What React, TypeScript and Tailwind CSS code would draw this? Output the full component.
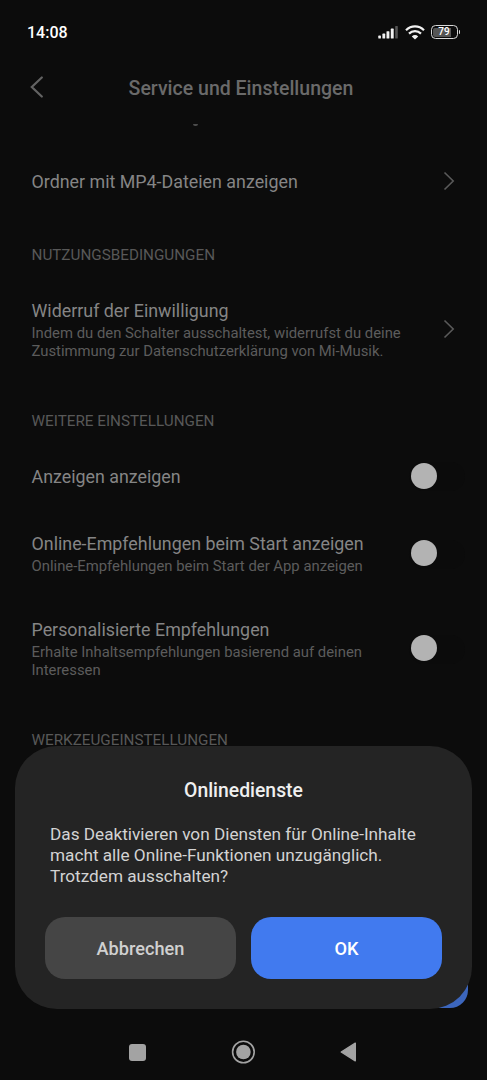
import type { ReactNode } from "react";

function StatusBar() {
  return (
    <div className="flex h-16 shrink-0 items-center justify-between pl-[27px] pr-[27px]">
      <span className="pt-[2px] text-[16px] font-medium leading-none text-white">14:08</span>
      <div className="flex items-center gap-[6px]">
        <svg width="21" height="14" viewBox="0 0 21 14" fill="#f2f2f2">
          <rect x="0.3" y="10.6" width="2.6" height="2.9" rx="0.6" />
          <rect x="4.4" y="8.6" width="2.8" height="4.9" rx="0.6" />
          <rect x="8.5" y="6.2" width="2.9" height="7.3" rx="0.6" />
          <rect x="12.8" y="3.6" width="2.9" height="9.9" rx="0.6" />
          <rect x="17.2" y="1" width="2.6" height="12.5" rx="0.6" fill="#555" />
        </svg>
        <svg width="20" height="15" viewBox="0 0 20 15" fill="none" stroke="#f2f2f2" strokeWidth="2.2">
          <path d="M1 5.2C6.2 0.2 13.8 0.2 19 5.2" />
          <path d="M4 8.6C7.4 5.3 12.6 5.3 16 8.6" />
          <path d="M6.8 11.4C8.7 9.6 11.3 9.6 13.2 11.4L10 14.6Z" fill="#f2f2f2" stroke="none" />
        </svg>
        <div className="flex items-center gap-px">
          <div className="flex h-[14px] w-[27px] rounded-[4.5px] border-[1.5px] border-[#d8d8d8] p-[1.5px]">
            <div className="flex flex-1 items-center justify-center rounded-[2px] bg-linear-to-r from-[#555] from-80% to-transparent to-80% text-[10px] font-medium leading-none text-white">
              79
            </div>
          </div>
          <div className="h-[4px] w-[1.5px] rounded-r-sm bg-[#d8d8d8]" />
        </div>
      </div>
    </div>
  );
}

function Header() {
  return (
    <div className="flex h-12 shrink-0 items-center pl-[30px] pr-[30px]">
      <svg className="mb-[2px]" width="14" height="22" viewBox="0 0 14 22" fill="none" stroke="#636363" strokeWidth="2.2" strokeLinecap="round">
        <path d="M11.8 1.5L1.8 11L11.8 20.5" />
      </svg>
      <h1 className="flex-1 pr-[19px] pt-[2px] text-center text-[19.5px] font-medium leading-none text-[#6a6a6a]">
        Service und Einstellungen
      </h1>
    </div>
  );
}

function Chevron() {
  return (
    <svg className="mb-[2px]" width="12" height="20" viewBox="0 0 12 20" fill="none" stroke="#5a5a5a" strokeWidth="1.6">
      <path d="M1.5 1.5L10.2 10L1.5 18.5" />
    </svg>
  );
}

function Toggle() {
  return (
    <div className="-my-[3px] mr-[-10px] flex h-[29px] w-[56px] items-center rounded-full bg-[#0b0b0b] pl-[2px]">
      <div className="mb-[2px] h-[26px] w-[26px] rounded-full bg-[#b3b3b3]" />
    </div>
  );
}

function SectionLabel({ className = "h-[63px] pt-[30px]", children }: { className?: string; children: ReactNode }) {
  return (
    <div className={`shrink-0 px-[31.5px] text-[15.25px] leading-[20px] text-[#585858] ${className}`}>{children}</div>
  );
}

function Row({ title, sub, action }: { title: string; sub?: string[]; action: ReactNode }) {
  return (
    <div className="flex shrink-0 items-center justify-between py-[22px] pl-[31.5px] pr-[32px]">
      <div className="whitespace-nowrap">
        <div className="text-[17.85px] leading-[22px] text-[#858585]">{title}</div>
        {sub && (
          <div className="pt-[2px] text-[14.85px] leading-[18px] text-[#5c5c5c]">
            {sub.map((line) => (
              <div key={line}>{line}</div>
            ))}
          </div>
        )}
      </div>
      {action}
    </div>
  );
}

function Dialog() {
  return (
    <div className="absolute left-[15px] top-[746px] flex h-[263px] w-[457px] flex-col rounded-[42px] bg-[#242424]">
      <h2 className="pt-[35px] text-center text-[19.35px] font-medium leading-[20px] text-[#efefef]">Onlinedienste</h2>
      <p className="whitespace-nowrap pl-[35px] pt-[23px] text-[17.2px] leading-[21px] text-[#d3d3d3]">
        Das Deaktivieren von Diensten für Online-Inhalte
        <br />
        macht alle Online-Funktionen unzugänglich.
        <br />
        Trotzdem ausschalten?
      </p>
      <div className="mt-auto flex gap-[15px] px-[30px] pb-[30px] text-[18.2px] font-medium">
        <button className="h-[62px] flex-1 rounded-[20px] bg-[#454545] pt-[2px] text-[#d0d0d0]">Abbrechen</button>
        <button className="h-[62px] flex-1 rounded-[20px] bg-[#417aef] pt-[2px] text-white">OK</button>
      </div>
    </div>
  );
}

function NavBar() {
  return (
    <div className="flex h-[56px] shrink-0 items-center pl-[129px]">
      <div className="h-[17px] w-[17px] rounded-[3px] bg-[#a3a3a3]" />
      <svg className="ml-[85px]" width="24" height="24" viewBox="0 0 24 24">
        <circle cx="12.4" cy="12" r="10.8" fill="none" stroke="#a3a3a3" strokeWidth="1.6" />
        <circle cx="12.4" cy="12" r="7.3" fill="#a3a3a3" />
      </svg>
      <svg className="ml-[85px]" width="17" height="20" viewBox="0 0 17 20">
        <path d="M1.2 10L15.3 1.2V18.8Z" fill="#a3a3a3" stroke="#a3a3a3" strokeWidth="1.4" strokeLinejoin="round" />
      </svg>
    </div>
  );
}

export default function App() {
  return (
    <div className="relative flex h-[1080px] w-[487px] flex-col overflow-hidden bg-[#0c0c0c] font-[Roboto,sans-serif]">
      <StatusBar />
      <Header />
      <div className="flex min-h-0 flex-1 flex-col overflow-hidden">
        <div className="h-[37px] shrink-0 pl-[193px] pt-[12px]">
          <div className="h-[2px] w-[5px] rounded-b-full bg-[#4c4c4c]" />
        </div>
        <Row title="Ordner mit MP4-Dateien anzeigen" action={<Chevron />} />
        <SectionLabel>NUTZUNGSBEDINGUNGEN</SectionLabel>
        <Row
          title="Widerruf der Einwilligung"
          sub={[
            "Indem du den Schalter ausschaltest, widerrufst du deine",
            "Zustimmung zur Datenschutzerklärung von Mi-Musik.",
          ]}
          action={<Chevron />}
        />
        <SectionLabel className="mb-[-1px] h-[62px] pt-[29px]">WEITERE EINSTELLUNGEN</SectionLabel>
        <Row title="Anzeigen anzeigen" action={<Toggle />} />
        <div className="flex flex-col pt-px">
          <Row
            title="Online-Empfehlungen beim Start anzeigen"
            sub={["Online-Empfehlungen beim Start der App anzeigen"]}
            action={<Toggle />}
          />
          <Row
            title="Personalisierte Empfehlungen"
            sub={["Erhalte Inhaltsempfehlungen basierend auf deinen", "Interessen"]}
            action={<Toggle />}
          />
        </div>
        <SectionLabel className="h-[62px] pt-[29px]">WERKZEUGEINSTELLUNGEN</SectionLabel>
        <div className="mb-[16px] mr-[19px] mt-auto h-[62px] w-[190px] shrink-0 self-end rounded-[18px] bg-[#3c66bd]" />
      </div>
      <NavBar />
      <Dialog />
    </div>
  );
}
